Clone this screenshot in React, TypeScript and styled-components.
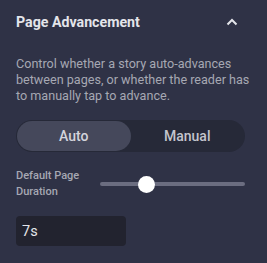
import React, { useState } from 'react';
import styled, { createGlobalStyle } from 'styled-components';

const GlobalStyle = createGlobalStyle`
  html, body {
    margin: 0;
    padding: 0;
    background: #2f3246;
  }
  * {
    box-sizing: border-box;
  }
`;

const Panel = styled.section`
  width: 267px;
  height: 263px;
  background: #2f3246;
  padding: 12px 22px 0 16px;
  font-family: Roboto, 'Liberation Sans', sans-serif;
`;

const Header = styled.div`
  display: flex;
  align-items: center;
  justify-content: space-between;
  height: 20px;
`;

const Title = styled.h2`
  margin: 0;
  font-size: 14.2px;
  font-weight: 700;
  color: #e4e5ea;
`;

const Chevron = styled.button`
  display: flex;
  align-items: center;
  justify-content: center;
  width: 20px;
  height: 20px;
  padding: 0;
  margin-right: 3px;
  border: none;
  background: none;
  color: #e4e5ea;
  cursor: pointer;
`;

const Description = styled.p`
  margin: 24px -6px 0 0;
  font-size: 12.6px;
  line-height: 16px;
  color: #a6a8b3;
`;

const Toggle = styled.div`
  display: grid;
  grid-template-columns: 1fr 1fr;
  height: 32px;
  margin-top: 16px;
  padding: 1px;
  border-radius: 16px;
  background: #262938;
`;

const ToggleOption = styled.button<{ $active: boolean }>`
  border: none;
  border-radius: 15px;
  padding: 0;
  font-family: inherit;
  font-size: 14px;
  font-weight: 500;
  color: ${(p) => (p.$active ? '#d3d4dc' : '#c3c4cc')};
  background: ${(p) => (p.$active ? '#45485b' : 'transparent')};
  cursor: pointer;
`;

const SliderRow = styled.div`
  display: grid;
  grid-template-columns: 84px 1fr;
  align-items: center;
  margin-top: 16px;
`;

const SliderLabel = styled.label`
  font-size: 11px;
  font-weight: 500;
  line-height: 16px;
  color: #a6a8b3;
`;

const Track = styled.div`
  position: relative;
  height: 4px;
  border-radius: 2px;
  background: #6b6d80;
`;

const Thumb = styled.div`
  position: absolute;
  top: 50%;
  width: 17px;
  height: 17px;
  margin-left: -8px;
  margin-top: -8.5px;
  border-radius: 50%;
  background: #ffffff;
`;

const DurationInput = styled.input`
  display: block;
  width: 110px;
  height: 30px;
  margin-top: 16px;
  padding: 0 6px;
  border: none;
  border-radius: 4px;
  background: #22232f;
  font-family: inherit;
  font-size: 14.5px;
  color: #e4e5ea;
  outline: none;
`;

function App() {
  const [mode, setMode] = useState('auto');
  const [duration, setDuration] = useState('7s');
  const progress = 32;

  return (
    <Panel>
      <GlobalStyle />
      <Header>
        <Title>Page Advancement</Title>
        <Chevron aria-label="Collapse">
          <svg width="12" height="8" viewBox="0 0 12 8" fill="none">
            <path d="M1.5 6.5 L6 2 L10.5 6.5" stroke="currentColor" strokeWidth="2" />
          </svg>
        </Chevron>
      </Header>
      <Description>
        Control whether a story auto-advances between pages, or whether the reader has to manually tap to advance.
      </Description>
      <Toggle>
        <ToggleOption $active={mode === 'auto'} onClick={() => setMode('auto')}>
          Auto
        </ToggleOption>
        <ToggleOption $active={mode === 'manual'} onClick={() => setMode('manual')}>
          Manual
        </ToggleOption>
      </Toggle>
      <SliderRow>
        <SliderLabel>
          Default Page
          <br />
          Duration
        </SliderLabel>
        <Track>
          <Thumb style={{ left: `${progress}%` }} />
        </Track>
      </SliderRow>
      <DurationInput value={duration} onChange={(e) => setDuration(e.target.value)} />
    </Panel>
  );
}

export default App;
